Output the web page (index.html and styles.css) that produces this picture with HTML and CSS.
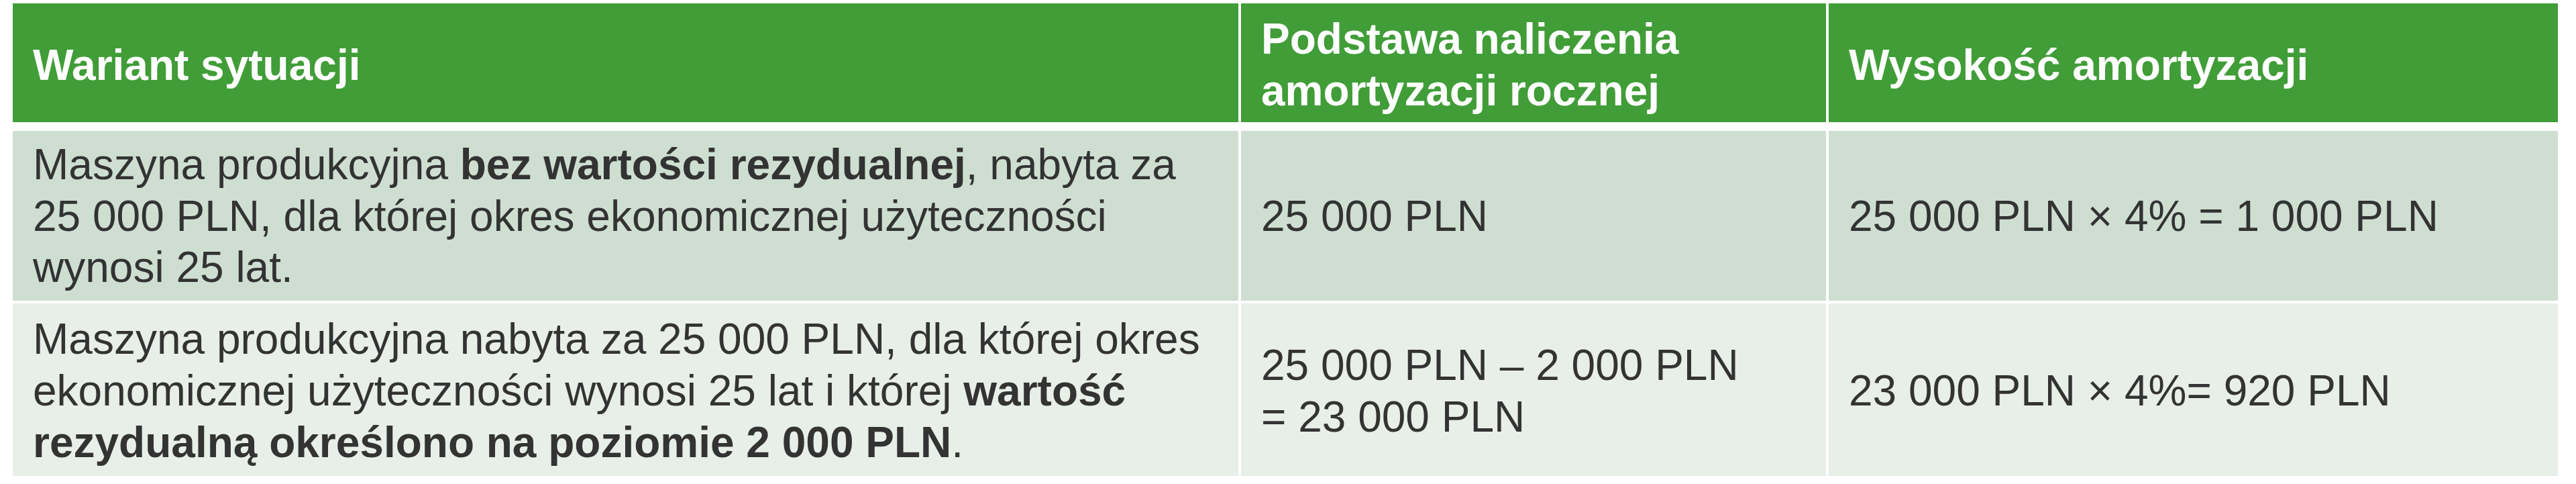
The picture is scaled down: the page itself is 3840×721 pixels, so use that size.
FILE: index.html
```html
<!DOCTYPE html>
<html lang="pl">
<head>
<meta charset="utf-8">
<title>Amortyzacja</title>
<link rel="stylesheet" href="styles.css">
</head>
<body>
<div class="table">
  <div class="row head">
    <div class="cell"><p class="txt">Wariant sytuacji</p></div>
    <div class="cell"><p class="txt">Podstawa naliczenia<br>amortyzacji rocznej</p></div>
    <div class="cell"><p class="txt">Wysokość amortyzacji</p></div>
  </div>
  <div class="row odd">
    <div class="cell"><p class="txt">Maszyna produkcyjna <b>bez wartości rezydualnej</b>, nabyta za<br>25 000 PLN, dla której okres ekonomicznej użyteczności<br>wynosi 25 lat.</p></div>
    <div class="cell"><p class="txt">25 000 PLN</p></div>
    <div class="cell"><p class="txt">25 000 PLN × 4% = 1 000 PLN</p></div>
  </div>
  <div class="row even">
    <div class="cell"><p class="txt">Maszyna produkcyjna nabyta za 25 000 PLN, dla której okres<br>ekonomicznej użyteczności wynosi 25 lat i której <b>wartość</b><br><b>rezydualną określono na poziomie 2 000 PLN</b>.</p></div>
    <div class="cell"><p class="txt">25 000 PLN – 2 000 PLN<br>= 23 000 PLN</p></div>
    <div class="cell"><p class="txt">23 000 PLN × 4%= 920 PLN</p></div>
  </div>
</div>
</body>
</html>
```
FILE: styles.css
```css
html, body {
  margin: 0;
  padding: 0;
  background: #ffffff;
}
body {
  padding: 5px 27px 0 19px;
  font-family: "Liberation Sans", Arial, sans-serif;
  font-size: 64px;
  line-height: 1.2;
  color: #333333;
}
.table {
  display: flex;
  flex-direction: column;
  width: 3794px;
}
.row {
  display: grid;
  grid-template-columns: 1827px 872px 1087px;
  column-gap: 4px;
}
.cell {
  display: flex;
  align-items: center;
  padding: 0 20px 0 30px;
  box-sizing: border-box;
  overflow: hidden;
}
.txt {
  margin: 0;
  white-space: nowrap;
}
.head {
  height: 177px;
  margin-bottom: 13px;
}
.head .cell {
  background: #409d37;
  color: #ffffff;
  font-weight: bold;
  padding-top: 7px;
}
.odd {
  height: 253px;
  margin-bottom: 4px;
}
.odd .cell {
  background: #cedfd1;
  padding-top: 1px;
}
.even {
  height: 257px;
}
.even .cell {
  background: #e7efe8;
  padding-top: 4px;
}
b {
  font-weight: bold;
}
```
